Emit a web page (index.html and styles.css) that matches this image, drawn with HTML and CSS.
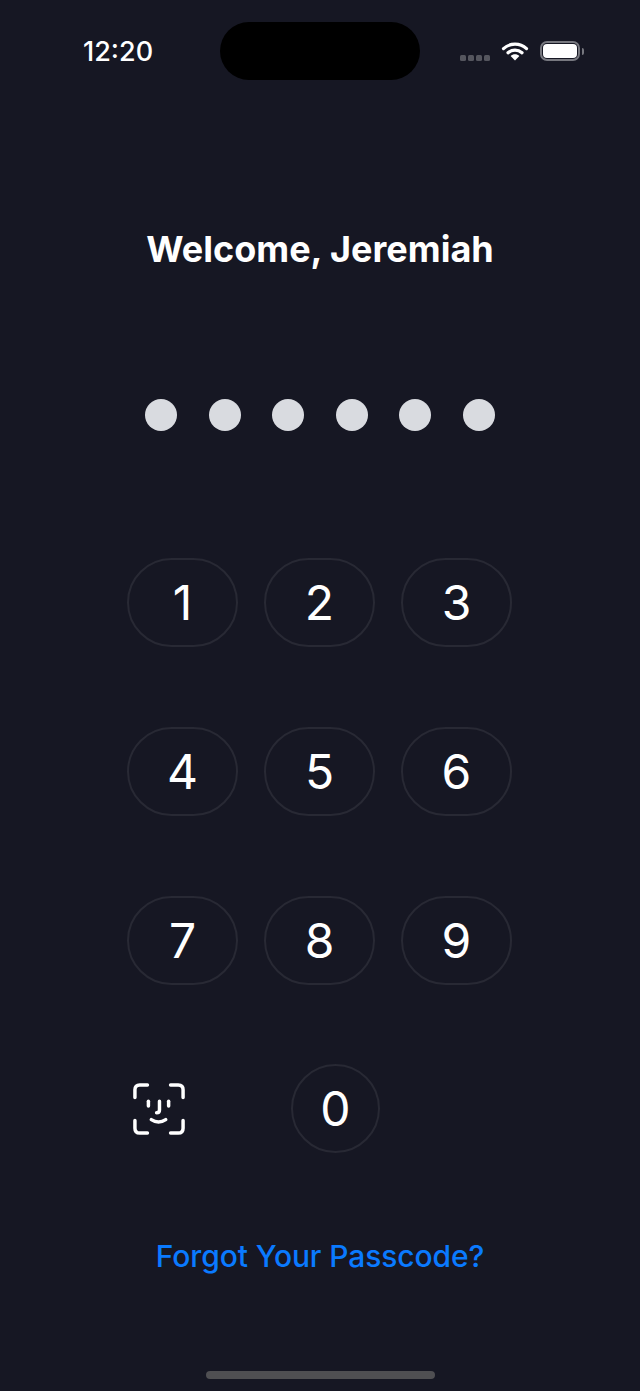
FILE: index.html
```html
<!DOCTYPE html>
<html lang="en">
<head>
    <meta charset="UTF-8" />
    <meta name="viewport" content="width=device-width, initial-scale=1.0" />
    <title>Passcode</title>
    <link rel="stylesheet" href="styles.css">
</head>
<body>
    <div class="status-bar">
        <div class="time">12:20</div>
        <div class="island"></div>
        <div class="status-icons">
            <div class="signal"><span></span><span></span><span></span><span></span></div>
            <svg class="wifi" width="28" height="20" viewBox="0 0 28 20">
                <path d="M2.5 7.6 C9 1.6 19 1.6 25.500 7.600" fill="none" stroke="#fff" stroke-width="3.2" stroke-linecap="round"/>
                <path d="M7 11.800 C11 8.200 17 8.200 21 11.800" fill="none" stroke="#fff" stroke-width="3.200" stroke-linecap="round"/>
                <path d="M14 19.500 L9.600 15 C12 12.800 16 12.800 18.400 15 Z" fill="#fff"/>
            </svg>
            <div class="battery"><div class="battery-fill"></div></div>
            <div class="battery-cap"></div>
        </div>
    </div>

    <h1 class="title">Welcome, Jeremiah</h1>

    <div class="dots">
        <span class="dot"></span>
        <span class="dot"></span>
        <span class="dot"></span>
        <span class="dot"></span>
        <span class="dot"></span>
        <span class="dot"></span>
    </div>

    <div class="keypad">
        <div class="key-row">
            <button class="key">1</button>
            <button class="key">2</button>
            <button class="key">3</button>
        </div>
        <div class="key-row">
            <button class="key">4</button>
            <button class="key">5</button>
            <button class="key">6</button>
        </div>
        <div class="key-row">
            <button class="key">7</button>
            <button class="key">8</button>
            <button class="key">9</button>
        </div>
        <div class="key-row last-row">
            <svg class="face-id" width="52" height="52" viewBox="0 0 54 54" fill="none" stroke="#fff" stroke-width="3.600" stroke-linecap="round" stroke-linejoin="round">
                <path d="M2 15 V7 Q2 2 7 2 H15"/>
                <path d="M39 2 H47 Q52 2 52 7 V15"/>
                <path d="M2 39 V47 Q2 52 7 52 H15"/>
                <path d="M52 39 V47 Q52 52 47 52 H39"/>
                <path d="M16 19 V24"/>
                <path d="M37 19 V24"/>
                <path d="M27.500 19 V28 Q27.500 31 24.500 31"/>
                <path d="M19 38 Q26.500 43 34 38"/>
            </svg>
            <button class="key key-round">0</button>
        </div>
    </div>

    <a class="forgot" href="#">Forgot Your Passcode?</a>

    <div class="home-bar"></div>
</body>
</html>
```

FILE: styles.css
```css
body {
    margin: 0;
    width: 640px;
    height: 1391px;
    overflow: hidden;
    background: #161723;
    color: #fff;
    font-family: Inter, "Liberation Sans", sans-serif;
    display: flex;
    flex-direction: column;
    align-items: center;
    position: relative;
}

.status-bar {
    width: 100%;
    height: 80px;
    padding-top: 22px;
    box-sizing: border-box;
    display: grid;
    grid-template-columns: 1fr 200px 1fr;
    align-items: start;
}

.time {
    padding: 15px 0 0 83px;
    font-size: 27px;
    font-weight: 500;
    line-height: 30px;
}

.island {
    height: 58px;
    background: #000;
    border-radius: 29px;
}

.status-icons {
    display: flex;
    align-items: center;
    justify-content: flex-end;
    margin-top: 17px;
    padding-right: 56px;
    height: 24px;
}

.signal {
    display: flex;
    gap: 2px;
    margin-top: 14px;
    margin-right: 11px;
}

.signal span {
    width: 6px;
    height: 6px;
    border-radius: 1.500px;
    background: #55565e;
}

.wifi {
    margin-right: 11px;
}

.battery {
    width: 40px;
    height: 20px;
    box-sizing: border-box;
    border: 2px solid #77787f;
    border-radius: 7px;
    padding: 1px;
}

.battery-fill {
    height: 100%;
    background: #fff;
    border-radius: 4px;
}

.battery-cap {
    width: 2px;
    height: 7px;
    margin-left: 2px;
    background: #77787f;
    border-radius: 0 2px 2px 0;
}

.title {
    margin: 127px 0 0 0;
    font-size: 36px;
    font-weight: 700;
    line-height: 84px;
}

.dots {
    display: flex;
    gap: 31.600px;
    margin-top: 108px;
}

.dot {
    width: 32px;
    height: 32px;
    border-radius: 50%;
    background: #d9dbe0;
}

.keypad {
    width: 385px;
    margin: 127px 1px 0 0;
    display: flex;
    flex-direction: column;
    gap: 79.800px;
}

.key-row {
    display: flex;
    gap: 26px;
}

.key {
    width: 111.500px;
    height: 89px;
    padding: 0;
    background: transparent;
    border: 2px solid #282934;
    border-radius: 44.500px;
    color: #fff;
    font-family: inherit;
    font-size: 48px;
    font-weight: 400;
}

.last-row {
    align-items: center;
}

.face-id {
    margin-left: 6px;
    margin-right: 80px;
}

.key-round {
    width: 89px;
}

.forgot {
    margin-top: 84px;
    color: #0a7aff;
    font-size: 30px;
    font-weight: 500;
    letter-spacing: -0.1px;
    line-height: 38px;
    text-decoration: none;
}

.home-bar {
    position: absolute;
    left: 206px;
    bottom: 12px;
    width: 229px;
    height: 8px;
    border-radius: 4px;
    background: #4f4f52;
}
```
